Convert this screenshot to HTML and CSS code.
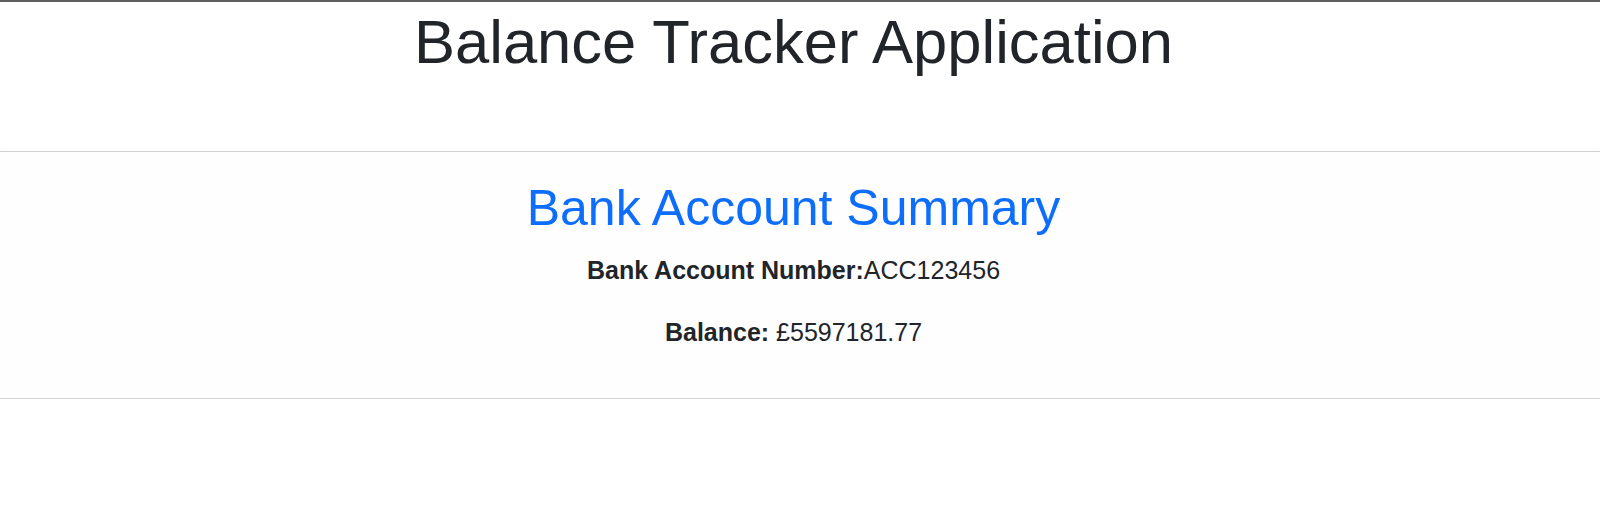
FILE: index.html
```html
<!DOCTYPE html>
<html lang="en">
<head>
<meta charset="utf-8">
<title>Balance Tracker Application</title>
<link rel="stylesheet" href="styles.css">
</head>
<body>
<div class="topline"></div>
<header class="page-header">
  <h1 class="app-title">Balance Tracker Application</h1>
</header>
<main class="summary-card">
  <div class="card-body">
    <h2 class="card-title">Bank Account Summary</h2>
    <p class="info-line"><strong>Bank Account Number:</strong>ACC123456</p>
    <p class="info-line"><strong>Balance:</strong> £5597181.77</p>
  </div>
</main>
</body>
</html>
```

FILE: styles.css
```css
html, body {
  margin: 0;
  padding: 0;
  background: #ffffff;
}

body {
  font-family: "Liberation Sans", Arial, sans-serif;
  color: #212529;
  font-size: 25px;
  line-height: 1.5;
}

.topline {
  height: 2px;
  background: #5f5f5f;
}

.page-header {
  padding: 3px 13px 0 0;
  height: 149px;
  box-sizing: border-box;
  text-align: center;
}

.app-title {
  margin: 0;
  font-size: 61.5px;
  font-weight: 400;
  line-height: 1.2;
  color: #212529;
}

.summary-card {
  display: block;
  background: #fefefe;
  border-top: 1px solid #d3d3d3;
  border-bottom: 1px solid #d3d3d3;
  box-shadow: 0 3px 6px rgba(0, 0, 0, 0.1);
}

.card-body {
  padding: 26px 13px 23px 0;
  text-align: center;
}

.card-title {
  margin: 0 0 14px;
  font-size: 50px;
  font-weight: 400;
  line-height: 1.2;
  color: #0d6efd;
}

.info-line {
  margin: 0 0 24px;
}

.info-line strong {
  font-weight: 700;
}
```
